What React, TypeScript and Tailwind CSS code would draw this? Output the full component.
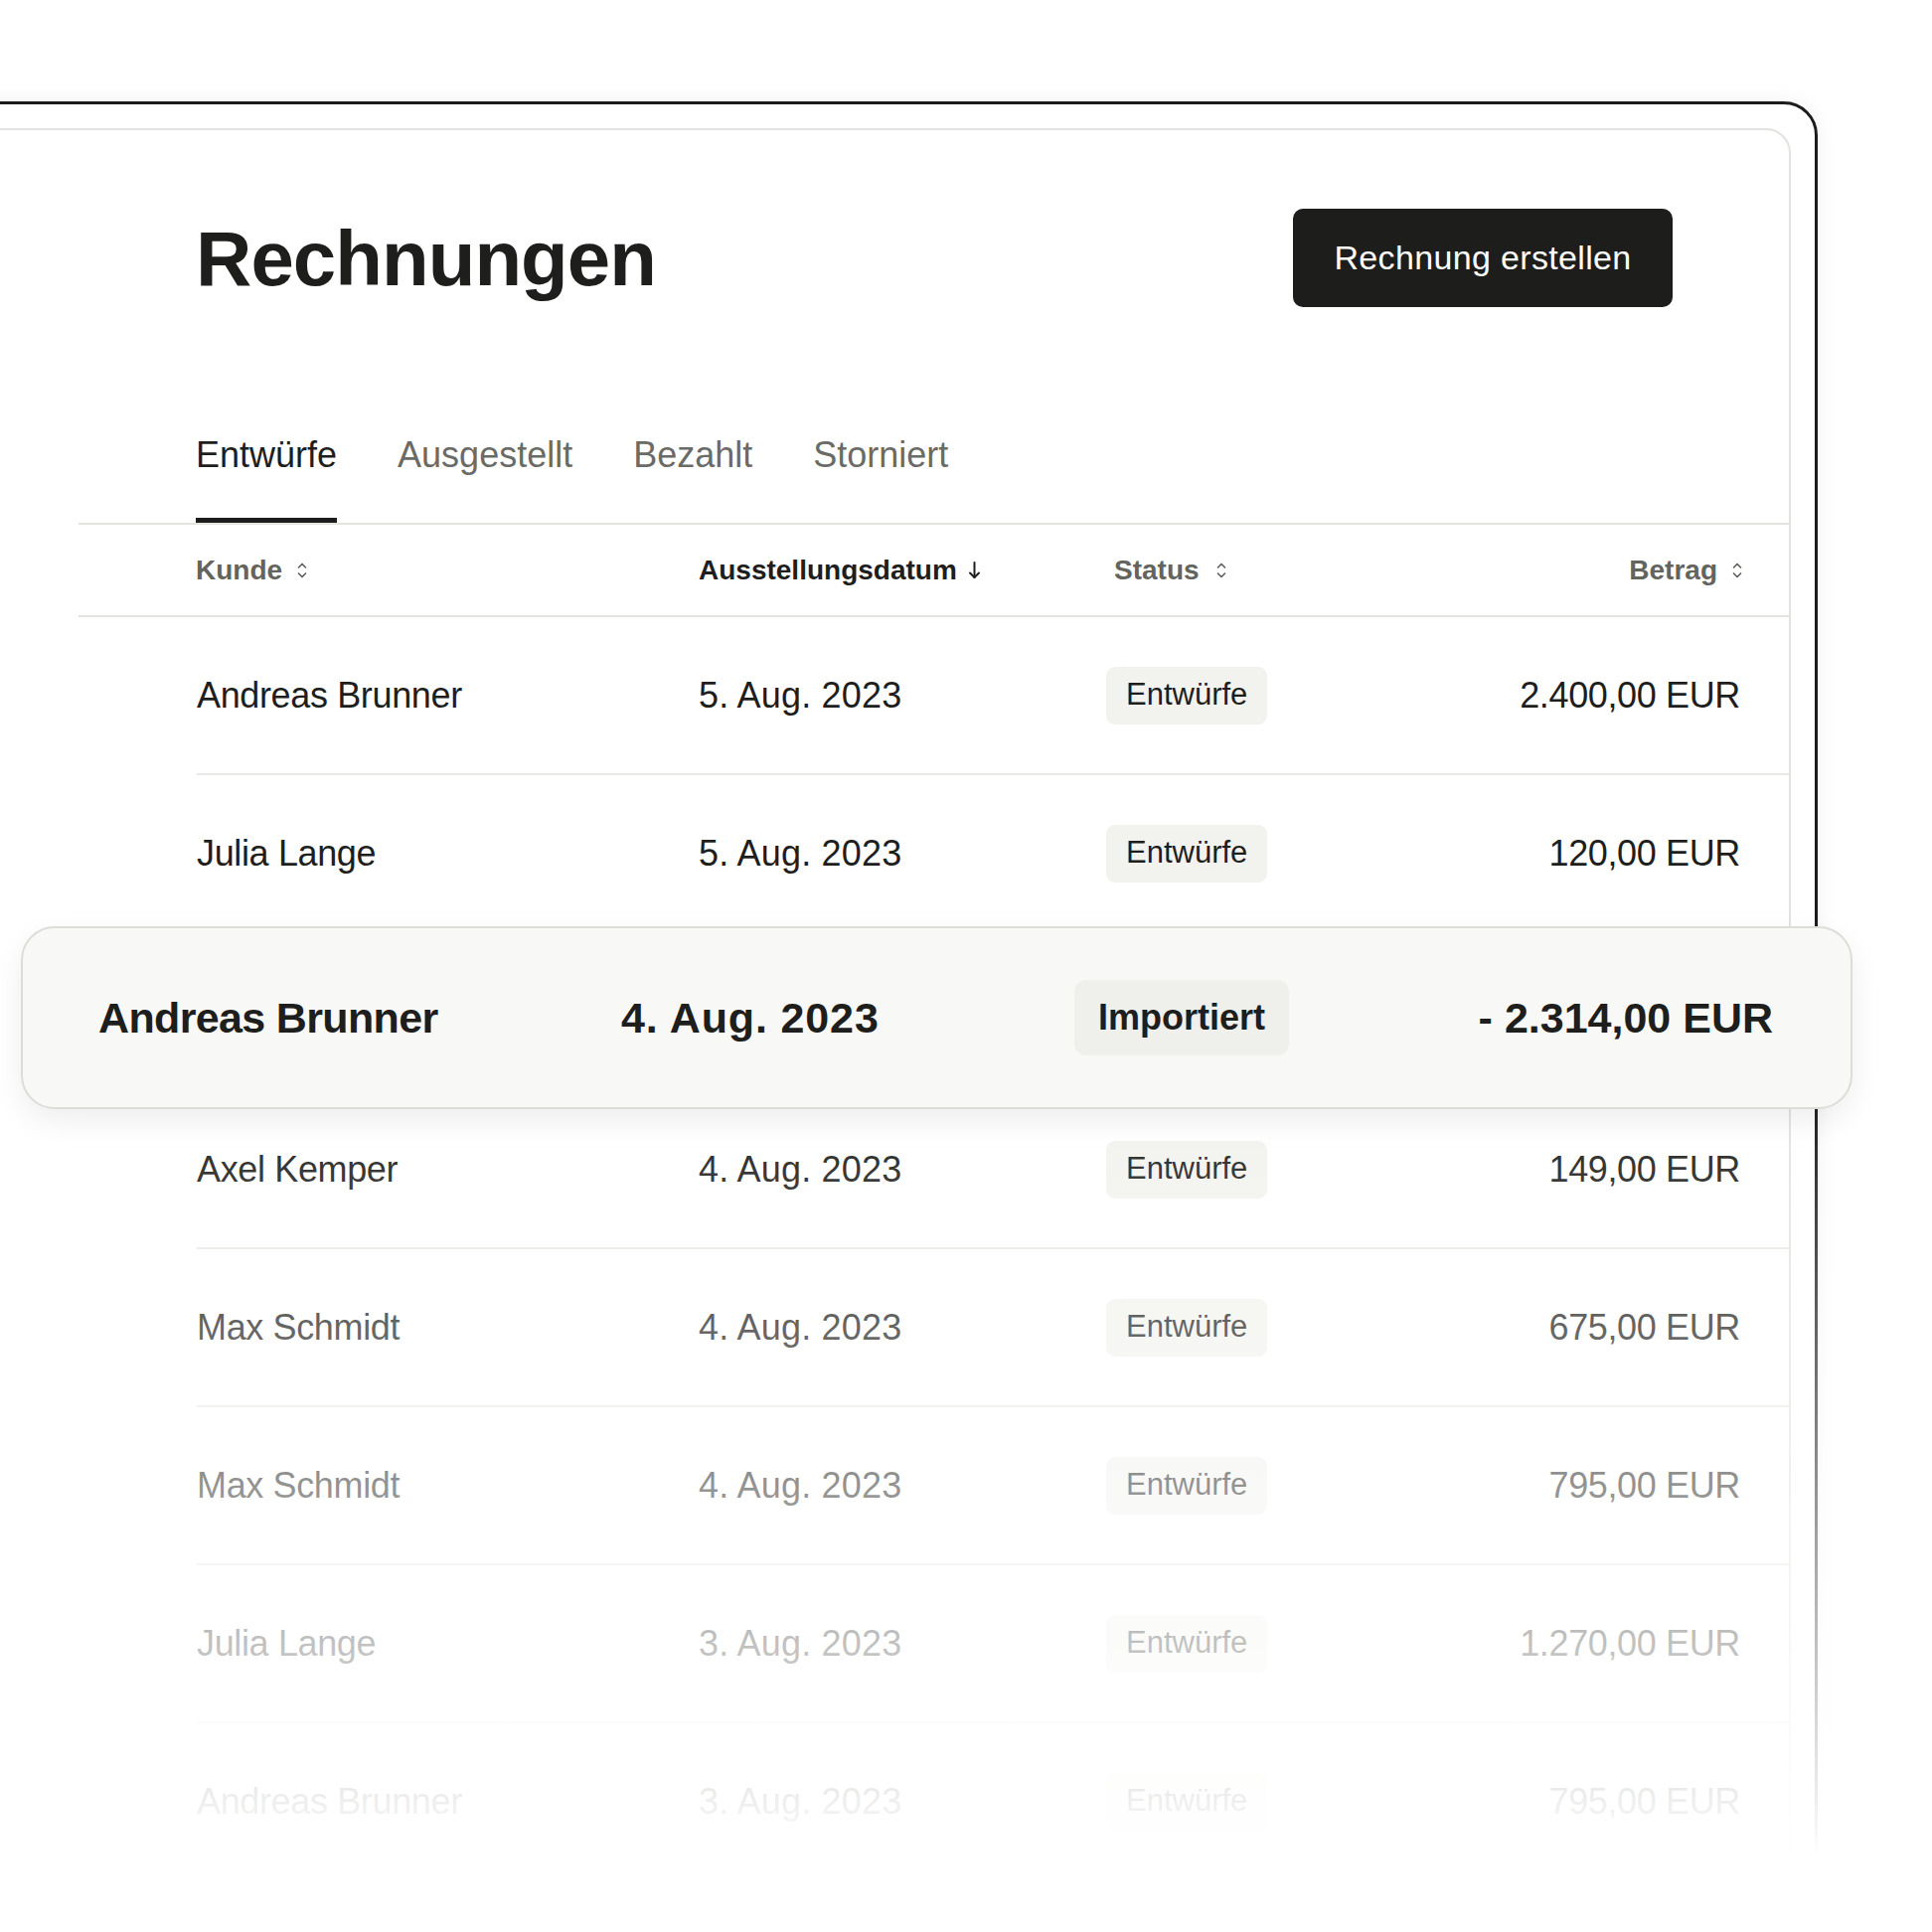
import React from "react";

type Row = {
  name: string;
  date: string;
  status: string;
  amount: string;
  hidden?: boolean;
};

const rows: Row[] = [
  { name: "Andreas Brunner", date: "5. Aug. 2023", status: "Entwürfe", amount: "2.400,00 EUR" },
  { name: "Julia Lange", date: "5. Aug. 2023", status: "Entwürfe", amount: "120,00 EUR" },
  // sits under the lifted row below, so it is never seen
  { name: "Andreas Brunner", date: "4. Aug. 2023", status: "Importiert", amount: "- 2.314,00 EUR", hidden: true },
  { name: "Axel Kemper", date: "4. Aug. 2023", status: "Entwürfe", amount: "149,00 EUR" },
  { name: "Max Schmidt", date: "4. Aug. 2023", status: "Entwürfe", amount: "675,00 EUR" },
  { name: "Max Schmidt", date: "4. Aug. 2023", status: "Entwürfe", amount: "795,00 EUR" },
  { name: "Julia Lange", date: "3. Aug. 2023", status: "Entwürfe", amount: "1.270,00 EUR" },
  { name: "Andreas Brunner", date: "3. Aug. 2023", status: "Entwürfe", amount: "795,00 EUR" },
];

const tabs = ["Entwürfe", "Ausgestellt", "Bezahlt", "Storniert"];

function SortIcon() {
  return (
    <svg width="12" height="22" viewBox="0 0 12 22" fill="none" className="shrink-0">
      <path d="M2.5 8L6 4.5L9.5 8" stroke="currentColor" strokeWidth="1.7" strokeLinecap="round" strokeLinejoin="round" />
      <path d="M2.5 14L6 17.5L9.5 14" stroke="currentColor" strokeWidth="1.7" strokeLinecap="round" strokeLinejoin="round" />
    </svg>
  );
}

function ArrowDown() {
  return (
    <svg width="13" height="19" viewBox="0 0 13 19" fill="none" className="shrink-0">
      <path d="M6.5 2V17" stroke="currentColor" strokeWidth="2" strokeLinecap="round" />
      <path d="M2 12.5L6.5 17L11 12.5" stroke="currentColor" strokeWidth="2" strokeLinecap="round" strokeLinejoin="round" />
    </svg>
  );
}

export default function App() {
  return (
    <div className="relative h-[1944px] w-[1944px] overflow-hidden bg-white font-['Liberation_Sans',Arial,sans-serif] text-[#1e1e1c]">
      <div className="pt-[102px]">
        {/* outer device frame */}
        <div className="ml-[-60px] w-[1889px] rounded-[34px] border-[3px] border-[#1c1c1c] p-[24px] shadow-[0_0_22px_rgba(0,0,0,0.06)]">
          <div className="rounded-[25px] border-2 border-[#e2e2de] pb-[260px]">
            <div className="flex items-center justify-between pl-[228px] pr-[117px] pt-[79px]">
              <h1 className="text-[78px] font-bold leading-[78px] tracking-[-0.012em]">Rechnungen</h1>
              <button
                type="button"
                className="flex h-[99px] w-[382px] items-center justify-center rounded-[10px] bg-[#1d1d1b] text-[34px] tracking-[0.01em] text-white"
              >
                Rechnung erstellen
              </button>
            </div>

            <div className="ml-[110px] mt-[127px]">
              <div className="flex gap-[61px] border-b-2 border-[#e3e3df] pl-[118px]">
                {tabs.map((tab, i) => (
                  <div
                    key={tab}
                    className={[
                      "border-b-[5px] pb-[41px] text-[36px] leading-[44px]",
                      i === 0 ? "border-[#1c1c1c] text-[#1e1e1c]" : "border-transparent text-[#6a6a66]",
                    ].join(" ")}
                  >
                    {tab}
                  </div>
                ))}
              </div>

              <div className="grid h-[93px] grid-cols-[506px_410px_1fr_auto] items-center border-b-2 border-[#e3e3df] pl-[118px] pr-[46px] text-[28px] font-bold">
                <div className="flex items-center gap-[14px] text-[#64645f]">
                  <span>Kunde</span>
                  <SortIcon />
                </div>
                <div className="flex items-center gap-[11px] text-[#1e1e1c]">
                  <span>Ausstellungsdatum</span>
                  <ArrowDown />
                </div>
                <div className="flex items-center gap-[16px] pl-[8px] text-[#64645f]">
                  <span>Status</span>
                  <SortIcon />
                </div>
                <div className="flex items-center gap-[14px] text-[#64645f]">
                  <span>Betrag</span>
                  <SortIcon />
                </div>
              </div>

              <div className="ml-[119px]">
                {rows.map((row, i) => (
                  <div
                    key={i}
                    className={[
                      "grid h-[159px] grid-cols-[505px_410px_1fr_auto] items-center border-b-2 border-[#e8e8e4] pr-[49px] text-[36px]",
                      row.hidden ? "invisible" : "",
                    ].join(" ")}
                  >
                    <div className="tracking-[-0.01em]">{row.name}</div>
                    <div className="tracking-[0.005em]">{row.date}</div>
                    <div>
                      <span className="inline-flex h-[58px] items-center rounded-[9px] bg-[#f2f2ee] px-[20px] text-[31px]">
                        {row.status}
                      </span>
                    </div>
                    <div className="text-right tracking-[-0.01em]">{row.amount}</div>
                  </div>
                ))}
              </div>
            </div>
          </div>
        </div>
      </div>

      {/* fade-out towards the bottom */}
      <div className="pointer-events-none absolute bottom-0 left-0 right-0 top-[1090px] bg-[linear-gradient(to_bottom,rgba(255,255,255,0)_0px,#ffffff_780px)]" />

      {/* lifted, highlighted row */}
      <div className="absolute left-[21px] top-[932px] z-10 grid h-[184px] w-[1843px] grid-cols-[526px_456px_1fr_auto] items-center rounded-[34px] border-2 border-[#dddcd8] bg-[#f8f8f6] pl-[76px] pr-[78px] text-[43px] font-bold shadow-[0_12px_32px_rgba(0,0,0,0.07)]">
        <div className="tracking-[-0.015em]">Andreas Brunner</div>
        <div className="tracking-[0.02em]">4. Aug. 2023</div>
        <div>
          <span className="inline-flex h-[76px] items-center rounded-[12px] bg-[#efefeb] px-[24px] text-[36px]">
            Importiert
          </span>
        </div>
        <div className="text-right">- 2.314,00 EUR</div>
      </div>
    </div>
  );
}
